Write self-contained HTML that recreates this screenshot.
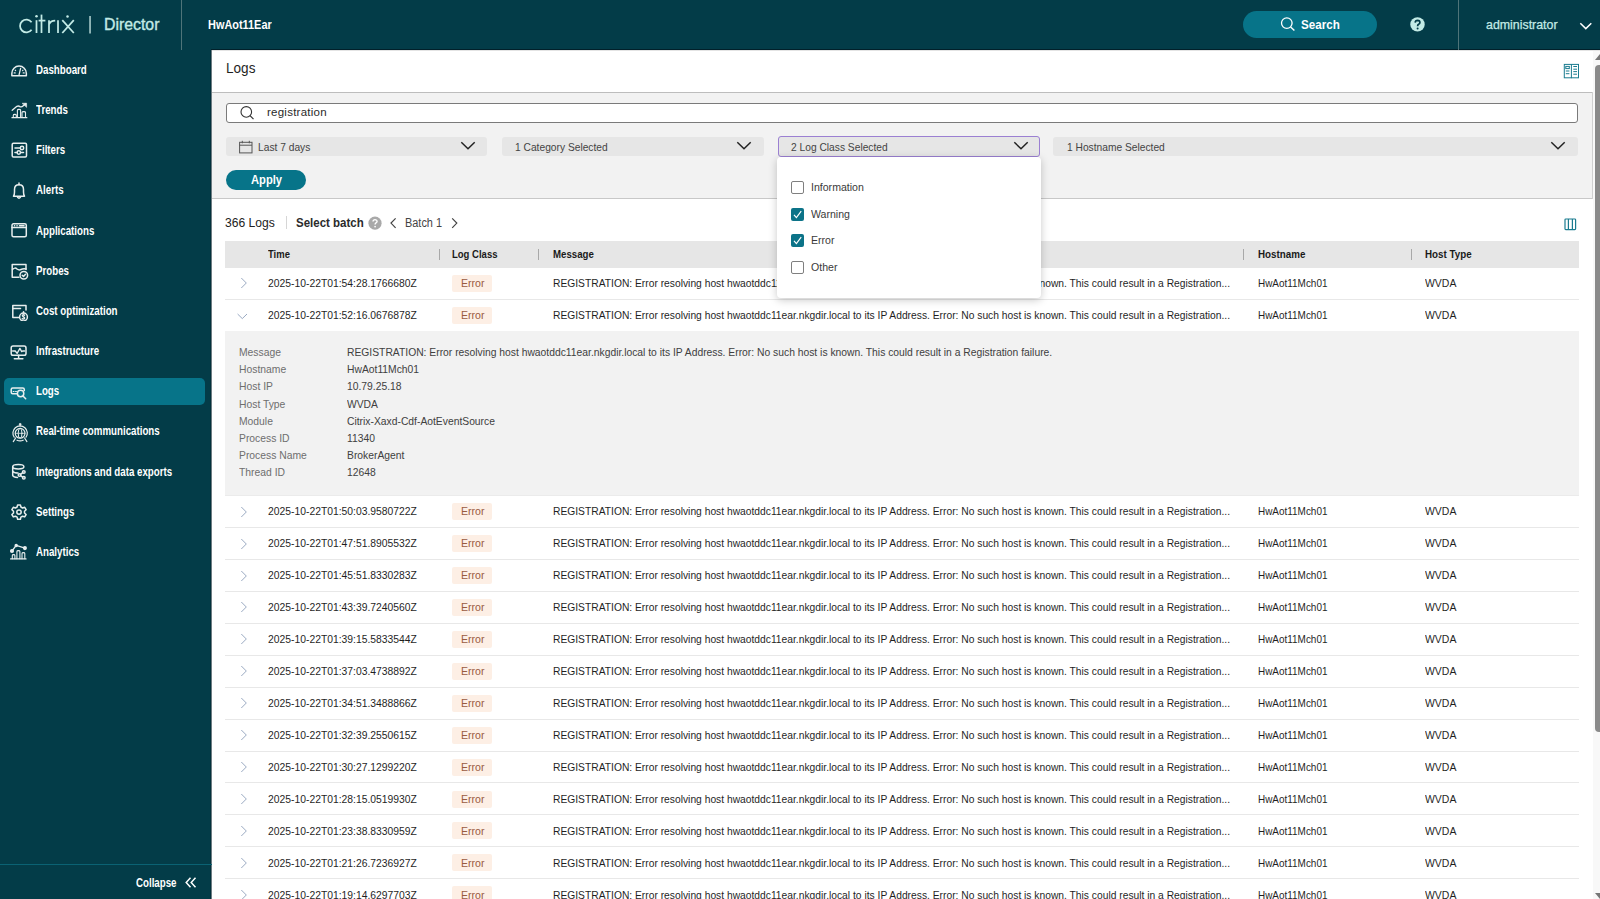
<!DOCTYPE html>
<html><head><meta charset="utf-8"><title>Logs - Citrix Director</title>
<style>
html,body{margin:0;padding:0;width:1600px;height:899px;overflow:hidden;background:#fff}
body{position:relative;font-family:"Liberation Sans",sans-serif}
.a{position:absolute}
.t{position:absolute;white-space:nowrap;line-height:1;transform-origin:0 0}
</style></head><body>
<div class="a" style="left:0px;top:0px;width:1600px;height:50px;background:#033c48"></div>
<div class="a" style="left:211px;top:49px;width:1389px;height:1px;background:#01202a"></div>
<svg class="a" style="left:0;top:0" width="100" height="50" viewBox="0 0 100 50">
<g stroke="#c3ebe6" stroke-width="1.75" fill="none" stroke-linecap="butt">
<path d="M31.6 22.2 A6.4 6.4 0 1 0 31.6 29.8"/>
<line x1="36.5" y1="20.2" x2="36.5" y2="33"/>
<line x1="41.5" y1="14.6" x2="41.5" y2="33"/>
<line x1="38.6" y1="20.6" x2="45.4" y2="20.6"/>
<path d="M49 33 V20.3 M49 24.5 Q50.5 20.6 55.2 20.6"/>
<line x1="58" y1="20.2" x2="58" y2="33"/>
<line x1="62.3" y1="20.2" x2="73.8" y2="33"/>
<line x1="73.8" y1="20.2" x2="62.3" y2="33"/>
</g>
<circle cx="36.5" cy="16.3" r="1.25" fill="#c3ebe6"/>
<circle cx="67.5" cy="16.5" r="1.25" fill="#c3ebe6"/>
<rect x="89.2" y="16" width="1.7" height="17.5" fill="#9fc3c3"/>
</svg>
<div class="t" style="left:104.30px;top:17.46px;font-size:16px;font-weight:400;color:#c3ebe6;transform:scaleX(0.99);-webkit-text-stroke:0.35px #c3ebe6;">Director</div>
<div class="a" style="left:181px;top:0px;width:1px;height:50px;background:#4f7479"></div>
<div class="t" style="left:208.40px;top:17.80px;font-size:13px;font-weight:700;color:#ffffff;transform:scaleX(0.84);">HwAot11Ear</div>
<div class="a" style="left:1243px;top:11px;width:134px;height:27px;border-radius:14px;background:#077489"></div>
<svg class="a" style="left:1278px;top:15px" width="20" height="20" viewBox="0 0 20 20">
<circle cx="8.8" cy="8.1" r="5.3" stroke="#fff" stroke-width="1.3" fill="none"/>
<line x1="12.6" y1="11.9" x2="16.4" y2="15.6" stroke="#fff" stroke-width="1.4"/></svg>
<div class="t" style="left:1301.00px;top:18.82px;font-size:12.5px;font-weight:700;color:#ffffff;transform:scaleX(0.93);">Search</div>
<svg class="a" style="left:1409px;top:16px" width="17" height="17" viewBox="0 0 17 17">
<circle cx="8.5" cy="8.4" r="7.2" fill="#c3ebe6"/>
<path d="M6.2 6.6 Q6.3 4.3 8.6 4.3 Q10.9 4.4 10.9 6.4 Q10.9 7.6 9.6 8.3 Q8.6 8.9 8.6 10.2" stroke="#033c48" stroke-width="1.7" fill="none"/>
<circle cx="8.6" cy="12.6" r="1" fill="#033c48"/></svg>
<div class="a" style="left:1458px;top:0px;width:1px;height:50px;background:#4f7479"></div>
<div class="t" style="left:1485.50px;top:19.32px;font-size:12.5px;font-weight:400;color:#c3ebe6;transform:scaleX(0.99);-webkit-text-stroke:0.25px #c3ebe6;">administrator</div>
<svg class="a" style="left:1578px;top:19px" width="16" height="12" viewBox="0 0 16 12">
<path d="M2.3 4.2 L7.8 9.6 L13.3 4.2" stroke="#fff" stroke-width="1.5" fill="none"/></svg>
<div class="a" style="left:0px;top:50px;width:212px;height:849px;background:#033c48"></div>
<div class="a" style="left:210px;top:50px;width:1px;height:849px;background:#02313c"></div>
<div class="a" style="left:211px;top:50px;width:1px;height:849px;background:#6d7c82"></div>
<div class="a" style="left:4px;top:378px;width:201px;height:27px;background:#077489;border-radius:5px"></div>
<div class="t" style="left:35.50px;top:63.74px;font-size:12px;font-weight:700;color:#ffffff;transform:scaleX(0.81);">Dashboard</div>
<div class="t" style="left:35.50px;top:103.93px;font-size:12px;font-weight:700;color:#ffffff;transform:scaleX(0.81);">Trends</div>
<div class="t" style="left:35.50px;top:144.12px;font-size:12px;font-weight:700;color:#ffffff;transform:scaleX(0.81);">Filters</div>
<div class="t" style="left:35.50px;top:184.31px;font-size:12px;font-weight:700;color:#ffffff;transform:scaleX(0.81);">Alerts</div>
<div class="t" style="left:35.50px;top:224.50px;font-size:12px;font-weight:700;color:#ffffff;transform:scaleX(0.81);">Applications</div>
<div class="t" style="left:35.50px;top:264.69px;font-size:12px;font-weight:700;color:#ffffff;transform:scaleX(0.81);">Probes</div>
<div class="t" style="left:35.50px;top:304.88px;font-size:12px;font-weight:700;color:#ffffff;transform:scaleX(0.81);">Cost optimization</div>
<div class="t" style="left:35.50px;top:345.07px;font-size:12px;font-weight:700;color:#ffffff;transform:scaleX(0.81);">Infrastructure</div>
<div class="t" style="left:35.50px;top:385.26px;font-size:12px;font-weight:700;color:#ffffff;transform:scaleX(0.81);">Logs</div>
<div class="t" style="left:35.50px;top:425.45px;font-size:12px;font-weight:700;color:#ffffff;transform:scaleX(0.81);">Real-time communications</div>
<div class="t" style="left:35.50px;top:465.64px;font-size:12px;font-weight:700;color:#ffffff;transform:scaleX(0.81);">Integrations and data exports</div>
<div class="t" style="left:35.50px;top:505.83px;font-size:12px;font-weight:700;color:#ffffff;transform:scaleX(0.81);">Settings</div>
<div class="t" style="left:35.50px;top:546.02px;font-size:12px;font-weight:700;color:#ffffff;transform:scaleX(0.81);">Analytics</div>
<svg class="a" style="left:9px;top:59.50px" width="20" height="20" viewBox="0 0 20 20"><g stroke="#e8eeee" stroke-width="1.5" fill="none" stroke-linecap="round" stroke-linejoin="round"><path d="M2.85 15.65 V13.3 A7.25 7.25 0 0 1 17.35 13.3 V15.65 Z"/><line x1="10.1" y1="14.7" x2="11.6" y2="8.4" stroke-width="1.3"/><line x1="6.2" y1="10.2" x2="6.6" y2="10.6" stroke-width="1.2"/><line x1="13.6" y1="10.6" x2="14" y2="10.2" stroke-width="1.2"/><line x1="5.2" y1="12.9" x2="6.2" y2="12.9" stroke-width="1.2"/><line x1="14.2" y1="12.9" x2="15.2" y2="12.9" stroke-width="1.2"/></g></svg>
<svg class="a" style="left:9px;top:99.69px" width="20" height="20" viewBox="0 0 20 20"><g stroke="#e8eeee" stroke-width="1.5" fill="none" stroke-linecap="round" stroke-linejoin="round"><path d="M3.2 10.3 L7.9 6.3 Q9.5 5.6 11 6.6 Q12.5 7.4 14.3 5.8 L16.6 3.8" stroke-width="1.3"/><path d="M13.4 3.3 L17.6 3.2 L17.6 7 Z" fill="#e8eeee" stroke-width="0.6"/><line x1="3" y1="17.7" x2="17.8" y2="17.7" stroke-width="1.3"/><path d="M4.3 17.5 V15.3 Q4.3 14.4 5.8 14.4 Q7.3 14.4 7.3 15.3 V17.5" stroke-width="1.1"/><path d="M8.4 17.5 V10.3 Q8.4 9.4 10 9.4 Q11.6 9.4 11.6 10.3 V17.5" stroke-width="1.1"/><path d="M13 17.5 V12.5 Q13 11.6 14.8 11.6 Q16.5 11.6 16.5 12.5 V17.5" stroke-width="1.1"/></g></svg>
<svg class="a" style="left:9px;top:139.88px" width="20" height="20" viewBox="0 0 20 20"><g stroke="#e8eeee" stroke-width="1.5" fill="none" stroke-linecap="round" stroke-linejoin="round"><rect x="3.2" y="3.2" width="14.3" height="13.8" rx="1.2"/><line x1="6" y1="8" x2="11" y2="8"/><circle cx="13" cy="8" r="1.7"/><line x1="6" y1="12.5" x2="8" y2="12.5"/><circle cx="9.8" cy="12.5" r="1.7"/><line x1="11.6" y1="12.5" x2="14.5" y2="12.5"/></g></svg>
<svg class="a" style="left:9px;top:180.07px" width="20" height="20" viewBox="0 0 20 20"><g stroke="#e8eeee" stroke-width="1.5" fill="none" stroke-linecap="round" stroke-linejoin="round"><path d="M4.5 16.2 Q5.5 14.8 5.5 12 V9.5 Q5.5 4.8 10 4.8 Q14.5 4.8 14.5 9.5 V12 Q14.5 14.8 15.5 16.2 Z"/><line x1="10" y1="3" x2="10" y2="4.7"/><path d="M8.6 17.3 Q10 19 11.4 17.3"/></g></svg>
<svg class="a" style="left:9px;top:220.26px" width="20" height="20" viewBox="0 0 20 20"><g stroke="#e8eeee" stroke-width="1.5" fill="none" stroke-linecap="round" stroke-linejoin="round"><rect x="3" y="3.8" width="14.3" height="13" rx="1.5"/><line x1="3" y1="7.5" x2="17.3" y2="7.5"/><line x1="5.5" y1="5.7" x2="5.6" y2="5.7"/><line x1="8" y1="5.7" x2="8.1" y2="5.7"/><line x1="10.5" y1="5.7" x2="15" y2="5.7"/></g></svg>
<svg class="a" style="left:9px;top:260.45px" width="20" height="20" viewBox="0 0 20 20"><g stroke="#e8eeee" stroke-width="1.5" fill="none" stroke-linecap="round" stroke-linejoin="round"><path d="M10 17.2 H3.2 V4.4 H17 V9.5"/><path d="M3.5 9.5 Q6 7 8 9 Q10 10.5 12 9.5 Q14 8.5 17 9"/><circle cx="14.8" cy="15.3" r="3.8"/><path d="M13.2 15.3 L14.5 16.5 L16.5 14.2"/></g></svg>
<svg class="a" style="left:9px;top:300.64px" width="20" height="20" viewBox="0 0 20 20"><g stroke="#e8eeee" stroke-width="1.5" fill="none" stroke-linecap="round" stroke-linejoin="round"><path d="M10 16.5 H3.8 V4.6 H17 V9"/><line x1="3.8" y1="7.6" x2="11.5" y2="7.6"/><circle cx="14.5" cy="16" r="3.9"/><path d="M15.5 14.2 Q14.5 13.4 13.6 14.1 Q13 15 14.5 15.8 Q16 16.6 15.3 17.7 Q14.4 18.4 13.3 17.6"/><line x1="14.5" y1="10.8" x2="14.5" y2="12"/></g></svg>
<svg class="a" style="left:9px;top:340.83px" width="20" height="20" viewBox="0 0 20 20"><g stroke="#e8eeee" stroke-width="1.5" fill="none" stroke-linecap="round" stroke-linejoin="round"><rect x="2.2" y="5.1" width="14.8" height="9.2" rx="1.8"/><path d="M3.6 10 H6.3 L8.1 12.4 L10.9 7.4 L12.7 10.6 L13.6 10 H15.6" stroke-width="1.3"/><line x1="9.6" y1="14.3" x2="9.6" y2="17.3"/><line x1="5.3" y1="17.7" x2="13.9" y2="17.7"/></g></svg>
<svg class="a" style="left:9px;top:381.02px" width="20" height="20" viewBox="0 0 20 20"><g stroke="#e8eeee" stroke-width="1.5" fill="none" stroke-linecap="round" stroke-linejoin="round"><path d="M8.3 12.8 H3.7 Q2.2 12.8 2.2 11.3 V8.4 Q2.2 6.9 3.7 6.9 H13.8 Q15.3 6.9 15.3 8.4 V9.6"/><line x1="4.2" y1="10.5" x2="5" y2="10.5" stroke-width="1.2"/><line x1="6.6" y1="10.5" x2="7.4" y2="10.5" stroke-width="1.2"/><circle cx="11.6" cy="12.5" r="3.2"/><line x1="14" y1="15" x2="16.7" y2="17.8"/></g></svg>
<svg class="a" style="left:9px;top:421.21px" width="20" height="22" viewBox="0 0 20 22"><g stroke="#e8eeee" stroke-width="1.5" fill="none" stroke-linecap="round" stroke-linejoin="round"><path d="M5.2 16.2 A7.2 7.2 0 1 1 17 16.2" stroke-width="1.2"/><circle cx="11.1" cy="12.3" r="4.9" stroke-width="1.2"/><ellipse cx="11.1" cy="12.3" rx="1.9" ry="4.9" stroke-width="1"/><line x1="6.4" y1="12.3" x2="15.8" y2="12.3" stroke-width="0.8"/><line x1="11.1" y1="3.8" x2="11.1" y2="5.2" stroke-width="1.1"/><circle cx="11.1" cy="3.2" r="0.9" fill="#e8eeee" stroke-width="0.6"/><path d="M4.3 20.6 L6.6 17 M17.9 20.6 L15.6 17" stroke-width="1.2"/><path d="M8 19.2 Q11.1 20.6 14.2 19.2" stroke-width="1.2"/></g></svg>
<svg class="a" style="left:9px;top:461.40px" width="20" height="20" viewBox="0 0 20 20"><g stroke="#e8eeee" stroke-width="1.5" fill="none" stroke-linecap="round" stroke-linejoin="round"><ellipse cx="9.3" cy="5.8" rx="5.6" ry="2.2"/><path d="M3.7 5.8 V14.5 Q4.5 16.3 8.5 16.4"/><path d="M3.8 10.5 Q5 12 9 12"/><circle cx="10.5" cy="14" r="1.3"/><circle cx="14.8" cy="11" r="1.3"/><circle cx="14.8" cy="16.8" r="1.3"/><line x1="11.6" y1="13.3" x2="13.7" y2="11.7"/><line x1="11.6" y1="14.7" x2="13.7" y2="16.1"/></g></svg>
<svg class="a" style="left:9px;top:501.59px" width="20" height="20" viewBox="0 0 20 20"><g stroke="#e8eeee" stroke-width="1.5" fill="none" stroke-linecap="round" stroke-linejoin="round"><path d="M8.6 2.9 H11.4 L11.9 5 L13.6 6 L15.7 5.3 L17.1 7.7 L15.5 9.2 V11 L17.1 12.5 L15.7 14.9 L13.6 14.2 L11.9 15.2 L11.4 17.3 H8.6 L8.1 15.2 L6.4 14.2 L4.3 14.9 L2.9 12.5 L4.5 11 V9.2 L2.9 7.7 L4.3 5.3 L6.4 6 L8.1 5 Z"/><circle cx="10" cy="10.1" r="2.2"/></g></svg>
<svg class="a" style="left:9px;top:541.78px" width="20" height="20" viewBox="0 0 20 20"><g stroke="#e8eeee" stroke-width="1.5" fill="none" stroke-linecap="round" stroke-linejoin="round"><path d="M3 9 L7.2 3.4 L15.9 6.1" stroke-width="1.3"/><circle cx="3" cy="9" r="1.3" fill="#e8eeee"/><circle cx="7.2" cy="3.5" r="1" fill="#e8eeee"/><circle cx="15.9" cy="6.1" r="1.3" fill="#e8eeee"/><line x1="1.6" y1="16.9" x2="17" y2="16.9" stroke-width="1.3"/><path d="M3.3 16.7 V13.4 Q3.3 12.6 4.6 12.6 Q5.9 12.6 5.9 13.4 V16.7" stroke-width="1.1"/><path d="M7.9 16.7 V9.4 Q7.9 8.6 9.4 8.6 Q10.9 8.6 10.9 9.4 V16.7" stroke-width="1.1"/><path d="M13 16.7 V11.4 Q13 10.6 14.4 10.6 Q15.8 10.6 15.8 11.4 V16.7" stroke-width="1.1"/></g></svg>
<div class="a" style="left:0px;top:864px;width:212px;height:1px;background:#0a6273"></div>
<div class="t" style="left:136.00px;top:877.34px;font-size:12px;font-weight:700;color:#ffffff;transform:scaleX(0.81);">Collapse</div>
<svg class="a" style="left:182px;top:874px" width="18" height="18" viewBox="0 0 18 18">
<path d="M8.5 3.8 L4.2 8.5 L8.5 13.2 M13.5 3.8 L9.2 8.5 L13.5 13.2" stroke="#fff" stroke-width="1.5" fill="none"/></svg>
<div class="a" style="left:212px;top:50px;width:1388px;height:849px;background:#ffffff"></div>
<div class="a" style="left:212px;top:50px;width:1388px;height:1px;background:#e4e4e4"></div>
<div class="t" style="left:225.50px;top:61.15px;font-size:14px;font-weight:400;color:#1f1f1f;transform:scaleX(0.97);">Logs</div>
<svg class="a" style="left:1562px;top:62px" width="18" height="18" viewBox="0 0 18 18">
<g stroke="#1b7c90" stroke-width="1" fill="none">
<rect x="2.3" y="2.4" width="14.2" height="13.4"/><line x1="9.4" y1="2.4" x2="9.4" y2="16.2"/>
<rect x="3.8" y="4.4" width="3.5" height="2.2"/><line x1="3.8" y1="9" x2="7.4" y2="9"/><line x1="3.8" y1="11.7" x2="7.4" y2="11.7"/>
<line x1="11.3" y1="4.5" x2="15" y2="4.5"/><line x1="11.3" y1="7.2" x2="15" y2="7.2"/><line x1="11.3" y1="9.6" x2="15" y2="9.6"/><line x1="11.3" y1="12.2" x2="15" y2="12.2"/>
</g></svg>
<div class="a" style="left:212px;top:92px;width:1381px;height:107px;background:#f2f2f2;border-top:1px solid #bdbdbd;border-bottom:1px solid #c8c8c8;box-sizing:border-box"></div>
<div class="a" style="left:1592px;top:92px;width:1px;height:107px;background:#d0d0d0"></div>
<div class="a" style="left:226px;top:103px;width:1352px;height:20px;background:#fff;border:1px solid #7a7a7a;border-radius:3px;box-sizing:border-box"></div>
<svg class="a" style="left:238px;top:104px" width="18" height="18" viewBox="0 0 18 18">
<circle cx="8.3" cy="7.9" r="5.3" stroke="#333" stroke-width="1.1" fill="none"/>
<line x1="12" y1="11.6" x2="15.5" y2="15.2" stroke="#333" stroke-width="1.2"/></svg>
<div class="t" style="left:267.00px;top:106.57px;font-size:11.5px;font-weight:400;color:#2a2a2a;letter-spacing:0.25px;">registration</div>
<div class="a" style="left:226px;top:136.5px;width:261px;height:19.5px;background:#e6e6e6;border-radius:3px"></div>
<div class="t" style="left:258.00px;top:141.69px;font-size:11px;font-weight:400;color:#444444;transform:scaleX(0.93);">Last 7 days</div>
<svg class="a" style="left:459.7px;top:138px" width="16" height="16" viewBox="0 0 16 16"><path d="M1.3 4.3 L8 10.7 L14.7 4.3" stroke="#222" stroke-width="1.5" fill="none"/></svg>
<div class="a" style="left:502px;top:136.5px;width:261.5px;height:19.5px;background:#e6e6e6;border-radius:3px"></div>
<div class="t" style="left:515.00px;top:141.69px;font-size:11px;font-weight:400;color:#444444;transform:scaleX(0.93);">1 Category Selected</div>
<svg class="a" style="left:736.2px;top:138px" width="16" height="16" viewBox="0 0 16 16"><path d="M1.3 4.3 L8 10.7 L14.7 4.3" stroke="#222" stroke-width="1.5" fill="none"/></svg>
<div class="a" style="left:778px;top:136px;width:262px;height:20.5px;background:#e6e6e6;border:1px solid #9b80d2;border-radius:3px;box-sizing:border-box"></div>
<div class="t" style="left:791.00px;top:141.69px;font-size:11px;font-weight:400;color:#444444;transform:scaleX(0.93);">2 Log Class Selected</div>
<svg class="a" style="left:1012.7px;top:138px" width="16" height="16" viewBox="0 0 16 16"><path d="M1.3 4.3 L8 10.7 L14.7 4.3" stroke="#222" stroke-width="1.5" fill="none"/></svg>
<div class="a" style="left:1053px;top:136.5px;width:524.5px;height:19.5px;background:#e6e6e6;border-radius:3px"></div>
<div class="t" style="left:1067.00px;top:141.69px;font-size:11px;font-weight:400;color:#444444;transform:scaleX(0.93);">1 Hostname Selected</div>
<svg class="a" style="left:1550.2px;top:138px" width="16" height="16" viewBox="0 0 16 16"><path d="M1.3 4.3 L8 10.7 L14.7 4.3" stroke="#222" stroke-width="1.5" fill="none"/></svg>
<svg class="a" style="left:237px;top:139px" width="18" height="16" viewBox="0 0 18 16">
<g stroke="#555" stroke-width="1" fill="none"><rect x="2.6" y="3.3" width="12.4" height="10.6"/><line x1="2.6" y1="6.2" x2="15" y2="6.2"/>
<line x1="5.3" y1="1.8" x2="5.3" y2="4.3"/><line x1="12.3" y1="1.8" x2="12.3" y2="4.3"/></g></svg>
<div class="a" style="left:226px;top:170px;width:80px;height:20px;border-radius:10px;background:#077489"></div>
<div class="t" style="left:251.00px;top:174.14px;font-size:12px;font-weight:700;color:#ffffff;transform:scaleX(0.93);">Apply</div>
<div class="t" style="left:225.00px;top:217.22px;font-size:12.5px;font-weight:400;color:#222222;transform:scaleX(0.97);">366 Logs</div>
<div class="a" style="left:286px;top:216px;width:1px;height:13px;background:#d6d6d6"></div>
<div class="t" style="left:296.00px;top:217.22px;font-size:12.5px;font-weight:700;color:#2b2b2b;transform:scaleX(0.92);">Select batch</div>
<svg class="a" style="left:367px;top:215px" width="16" height="16" viewBox="0 0 16 16">
<circle cx="8" cy="8.2" r="6.6" fill="#a9a9a9"/>
<path d="M6 6.5 Q6.1 4.6 8.1 4.6 Q10.1 4.7 10.1 6.3 Q10.1 7.3 9 7.9 Q8.1 8.4 8.1 9.6" stroke="#fff" stroke-width="1.4" fill="none"/>
<circle cx="8.1" cy="11.6" r="0.85" fill="#fff"/></svg>
<svg class="a" style="left:386px;top:215px" width="14" height="16" viewBox="0 0 14 16">
<path d="M9.6 3.4 L5 8.1 L9.6 12.8" stroke="#444" stroke-width="1.2" fill="none"/></svg>
<div class="t" style="left:405.00px;top:216.84px;font-size:12px;font-weight:400;color:#444444;transform:scaleX(0.91);">Batch 1</div>
<svg class="a" style="left:448px;top:215px" width="14" height="16" viewBox="0 0 14 16">
<path d="M4.2 3.4 L8.8 8.1 L4.2 12.8" stroke="#444" stroke-width="1.2" fill="none"/></svg>
<svg class="a" style="left:1562px;top:216px" width="16" height="16" viewBox="0 0 16 16">
<g stroke="#1b7c90" stroke-width="1.2" fill="none"><rect x="3" y="3" width="10.6" height="10.6" rx="0.8"/><line x1="6.4" y1="3" x2="6.4" y2="13.6"/><line x1="10.4" y1="3" x2="10.4" y2="13.6"/></g></svg>
<div class="a" style="left:225px;top:241px;width:1354px;height:27px;background:#e6e6e6"></div>
<div class="t" style="left:268.00px;top:248.69px;font-size:11px;font-weight:700;color:#1a1a1a;transform:scaleX(0.86);">Time</div>
<div class="t" style="left:452.00px;top:248.69px;font-size:11px;font-weight:700;color:#1a1a1a;transform:scaleX(0.865);">Log Class</div>
<div class="t" style="left:553.00px;top:248.69px;font-size:11px;font-weight:700;color:#1a1a1a;transform:scaleX(0.88);">Message</div>
<div class="t" style="left:1257.50px;top:248.69px;font-size:11px;font-weight:700;color:#1a1a1a;transform:scaleX(0.89);">Hostname</div>
<div class="t" style="left:1425.00px;top:248.69px;font-size:11px;font-weight:700;color:#1a1a1a;transform:scaleX(0.89);">Host Type</div>
<div class="a" style="left:438.5px;top:249px;width:1px;height:11px;background:#a8a8a8"></div>
<div class="a" style="left:538px;top:249px;width:1px;height:11px;background:#a8a8a8"></div>
<div class="a" style="left:1243px;top:249px;width:1px;height:11px;background:#a8a8a8"></div>
<div class="a" style="left:1411px;top:249px;width:1px;height:11px;background:#a8a8a8"></div>
<div class="a" style="left:225px;top:298.69px;width:1354px;height:1px;background:#e8e8e8"></div>
<svg class="a" style="left:236px;top:276.42px" width="14" height="14" viewBox="0 0 14 14"><path d="M5.3 2 L10.3 7 L5.3 12" stroke="#93a4bf" stroke-width="0.95" fill="none"/></svg>
<div class="t" style="left:268.00px;top:278.11px;font-size:11px;font-weight:400;color:#1f1f1f;transform:scaleX(0.94);">2025-10-22T01:54:28.1766680Z</div>
<div class="a" style="left:452px;top:274.82px;width:40px;height:17px;background:#fdefe5;border-radius:2px"></div>
<div class="t" style="left:460.50px;top:278.11px;font-size:11px;font-weight:400;color:#9a5b3f;transform:scaleX(0.96);">Error</div>
<div class="t" style="left:553.00px;top:278.11px;font-size:11px;font-weight:400;color:#1f1f1f;transform:scaleX(0.934);">REGISTRATION: Error resolving host hwaotddc11ear.nkgdir.local to its IP Address. Error: No such host is known. This could result in a Registration...</div>
<div class="t" style="left:1257.50px;top:278.11px;font-size:11px;font-weight:400;color:#1f1f1f;transform:scaleX(0.904);">HwAot11Mch01</div>
<div class="t" style="left:1425.00px;top:278.11px;font-size:11px;font-weight:400;color:#1f1f1f;transform:scaleX(0.95);">WVDA</div>
<svg class="a" style="left:234px;top:309.36px" width="16" height="14" viewBox="0 0 16 14"><path d="M3.6 5 L8.3 9.6 L13 5" stroke="#93a4bf" stroke-width="0.95" fill="none"/></svg>
<div class="t" style="left:268.00px;top:310.05px;font-size:11px;font-weight:400;color:#1f1f1f;transform:scaleX(0.94);">2025-10-22T01:52:16.0676878Z</div>
<div class="a" style="left:452px;top:306.76px;width:40px;height:17px;background:#fdefe5;border-radius:2px"></div>
<div class="t" style="left:460.50px;top:310.05px;font-size:11px;font-weight:400;color:#9a5b3f;transform:scaleX(0.96);">Error</div>
<div class="t" style="left:553.00px;top:310.05px;font-size:11px;font-weight:400;color:#1f1f1f;transform:scaleX(0.934);">REGISTRATION: Error resolving host hwaotddc11ear.nkgdir.local to its IP Address. Error: No such host is known. This could result in a Registration...</div>
<div class="t" style="left:1257.50px;top:310.05px;font-size:11px;font-weight:400;color:#1f1f1f;transform:scaleX(0.904);">HwAot11Mch01</div>
<div class="t" style="left:1425.00px;top:310.05px;font-size:11px;font-weight:400;color:#1f1f1f;transform:scaleX(0.95);">WVDA</div>
<div class="a" style="left:225px;top:526.94px;width:1354px;height:1px;background:#e8e8e8"></div>
<svg class="a" style="left:236px;top:504.67px" width="14" height="14" viewBox="0 0 14 14"><path d="M5.3 2 L10.3 7 L5.3 12" stroke="#93a4bf" stroke-width="0.95" fill="none"/></svg>
<div class="t" style="left:268.00px;top:506.36px;font-size:11px;font-weight:400;color:#1f1f1f;transform:scaleX(0.94);">2025-10-22T01:50:03.9580722Z</div>
<div class="a" style="left:452px;top:503.07px;width:40px;height:17px;background:#fdefe5;border-radius:2px"></div>
<div class="t" style="left:460.50px;top:506.36px;font-size:11px;font-weight:400;color:#9a5b3f;transform:scaleX(0.96);">Error</div>
<div class="t" style="left:553.00px;top:506.36px;font-size:11px;font-weight:400;color:#1f1f1f;transform:scaleX(0.934);">REGISTRATION: Error resolving host hwaotddc11ear.nkgdir.local to its IP Address. Error: No such host is known. This could result in a Registration...</div>
<div class="t" style="left:1257.50px;top:506.36px;font-size:11px;font-weight:400;color:#1f1f1f;transform:scaleX(0.904);">HwAot11Mch01</div>
<div class="t" style="left:1425.00px;top:506.36px;font-size:11px;font-weight:400;color:#1f1f1f;transform:scaleX(0.95);">WVDA</div>
<div class="a" style="left:225px;top:558.88px;width:1354px;height:1px;background:#e8e8e8"></div>
<svg class="a" style="left:236px;top:536.61px" width="14" height="14" viewBox="0 0 14 14"><path d="M5.3 2 L10.3 7 L5.3 12" stroke="#93a4bf" stroke-width="0.95" fill="none"/></svg>
<div class="t" style="left:268.00px;top:538.30px;font-size:11px;font-weight:400;color:#1f1f1f;transform:scaleX(0.94);">2025-10-22T01:47:51.8905532Z</div>
<div class="a" style="left:452px;top:535.01px;width:40px;height:17px;background:#fdefe5;border-radius:2px"></div>
<div class="t" style="left:460.50px;top:538.30px;font-size:11px;font-weight:400;color:#9a5b3f;transform:scaleX(0.96);">Error</div>
<div class="t" style="left:553.00px;top:538.30px;font-size:11px;font-weight:400;color:#1f1f1f;transform:scaleX(0.934);">REGISTRATION: Error resolving host hwaotddc11ear.nkgdir.local to its IP Address. Error: No such host is known. This could result in a Registration...</div>
<div class="t" style="left:1257.50px;top:538.30px;font-size:11px;font-weight:400;color:#1f1f1f;transform:scaleX(0.904);">HwAot11Mch01</div>
<div class="t" style="left:1425.00px;top:538.30px;font-size:11px;font-weight:400;color:#1f1f1f;transform:scaleX(0.95);">WVDA</div>
<div class="a" style="left:225px;top:590.82px;width:1354px;height:1px;background:#e8e8e8"></div>
<svg class="a" style="left:236px;top:568.55px" width="14" height="14" viewBox="0 0 14 14"><path d="M5.3 2 L10.3 7 L5.3 12" stroke="#93a4bf" stroke-width="0.95" fill="none"/></svg>
<div class="t" style="left:268.00px;top:570.24px;font-size:11px;font-weight:400;color:#1f1f1f;transform:scaleX(0.94);">2025-10-22T01:45:51.8330283Z</div>
<div class="a" style="left:452px;top:566.95px;width:40px;height:17px;background:#fdefe5;border-radius:2px"></div>
<div class="t" style="left:460.50px;top:570.24px;font-size:11px;font-weight:400;color:#9a5b3f;transform:scaleX(0.96);">Error</div>
<div class="t" style="left:553.00px;top:570.24px;font-size:11px;font-weight:400;color:#1f1f1f;transform:scaleX(0.934);">REGISTRATION: Error resolving host hwaotddc11ear.nkgdir.local to its IP Address. Error: No such host is known. This could result in a Registration...</div>
<div class="t" style="left:1257.50px;top:570.24px;font-size:11px;font-weight:400;color:#1f1f1f;transform:scaleX(0.904);">HwAot11Mch01</div>
<div class="t" style="left:1425.00px;top:570.24px;font-size:11px;font-weight:400;color:#1f1f1f;transform:scaleX(0.95);">WVDA</div>
<div class="a" style="left:225px;top:622.76px;width:1354px;height:1px;background:#e8e8e8"></div>
<svg class="a" style="left:236px;top:600.49px" width="14" height="14" viewBox="0 0 14 14"><path d="M5.3 2 L10.3 7 L5.3 12" stroke="#93a4bf" stroke-width="0.95" fill="none"/></svg>
<div class="t" style="left:268.00px;top:602.18px;font-size:11px;font-weight:400;color:#1f1f1f;transform:scaleX(0.94);">2025-10-22T01:43:39.7240560Z</div>
<div class="a" style="left:452px;top:598.89px;width:40px;height:17px;background:#fdefe5;border-radius:2px"></div>
<div class="t" style="left:460.50px;top:602.18px;font-size:11px;font-weight:400;color:#9a5b3f;transform:scaleX(0.96);">Error</div>
<div class="t" style="left:553.00px;top:602.18px;font-size:11px;font-weight:400;color:#1f1f1f;transform:scaleX(0.934);">REGISTRATION: Error resolving host hwaotddc11ear.nkgdir.local to its IP Address. Error: No such host is known. This could result in a Registration...</div>
<div class="t" style="left:1257.50px;top:602.18px;font-size:11px;font-weight:400;color:#1f1f1f;transform:scaleX(0.904);">HwAot11Mch01</div>
<div class="t" style="left:1425.00px;top:602.18px;font-size:11px;font-weight:400;color:#1f1f1f;transform:scaleX(0.95);">WVDA</div>
<div class="a" style="left:225px;top:654.70px;width:1354px;height:1px;background:#e8e8e8"></div>
<svg class="a" style="left:236px;top:632.43px" width="14" height="14" viewBox="0 0 14 14"><path d="M5.3 2 L10.3 7 L5.3 12" stroke="#93a4bf" stroke-width="0.95" fill="none"/></svg>
<div class="t" style="left:268.00px;top:634.12px;font-size:11px;font-weight:400;color:#1f1f1f;transform:scaleX(0.94);">2025-10-22T01:39:15.5833544Z</div>
<div class="a" style="left:452px;top:630.83px;width:40px;height:17px;background:#fdefe5;border-radius:2px"></div>
<div class="t" style="left:460.50px;top:634.12px;font-size:11px;font-weight:400;color:#9a5b3f;transform:scaleX(0.96);">Error</div>
<div class="t" style="left:553.00px;top:634.12px;font-size:11px;font-weight:400;color:#1f1f1f;transform:scaleX(0.934);">REGISTRATION: Error resolving host hwaotddc11ear.nkgdir.local to its IP Address. Error: No such host is known. This could result in a Registration...</div>
<div class="t" style="left:1257.50px;top:634.12px;font-size:11px;font-weight:400;color:#1f1f1f;transform:scaleX(0.904);">HwAot11Mch01</div>
<div class="t" style="left:1425.00px;top:634.12px;font-size:11px;font-weight:400;color:#1f1f1f;transform:scaleX(0.95);">WVDA</div>
<div class="a" style="left:225px;top:686.64px;width:1354px;height:1px;background:#e8e8e8"></div>
<svg class="a" style="left:236px;top:664.37px" width="14" height="14" viewBox="0 0 14 14"><path d="M5.3 2 L10.3 7 L5.3 12" stroke="#93a4bf" stroke-width="0.95" fill="none"/></svg>
<div class="t" style="left:268.00px;top:666.06px;font-size:11px;font-weight:400;color:#1f1f1f;transform:scaleX(0.94);">2025-10-22T01:37:03.4738892Z</div>
<div class="a" style="left:452px;top:662.77px;width:40px;height:17px;background:#fdefe5;border-radius:2px"></div>
<div class="t" style="left:460.50px;top:666.06px;font-size:11px;font-weight:400;color:#9a5b3f;transform:scaleX(0.96);">Error</div>
<div class="t" style="left:553.00px;top:666.06px;font-size:11px;font-weight:400;color:#1f1f1f;transform:scaleX(0.934);">REGISTRATION: Error resolving host hwaotddc11ear.nkgdir.local to its IP Address. Error: No such host is known. This could result in a Registration...</div>
<div class="t" style="left:1257.50px;top:666.06px;font-size:11px;font-weight:400;color:#1f1f1f;transform:scaleX(0.904);">HwAot11Mch01</div>
<div class="t" style="left:1425.00px;top:666.06px;font-size:11px;font-weight:400;color:#1f1f1f;transform:scaleX(0.95);">WVDA</div>
<div class="a" style="left:225px;top:718.58px;width:1354px;height:1px;background:#e8e8e8"></div>
<svg class="a" style="left:236px;top:696.31px" width="14" height="14" viewBox="0 0 14 14"><path d="M5.3 2 L10.3 7 L5.3 12" stroke="#93a4bf" stroke-width="0.95" fill="none"/></svg>
<div class="t" style="left:268.00px;top:698.00px;font-size:11px;font-weight:400;color:#1f1f1f;transform:scaleX(0.94);">2025-10-22T01:34:51.3488866Z</div>
<div class="a" style="left:452px;top:694.71px;width:40px;height:17px;background:#fdefe5;border-radius:2px"></div>
<div class="t" style="left:460.50px;top:698.00px;font-size:11px;font-weight:400;color:#9a5b3f;transform:scaleX(0.96);">Error</div>
<div class="t" style="left:553.00px;top:698.00px;font-size:11px;font-weight:400;color:#1f1f1f;transform:scaleX(0.934);">REGISTRATION: Error resolving host hwaotddc11ear.nkgdir.local to its IP Address. Error: No such host is known. This could result in a Registration...</div>
<div class="t" style="left:1257.50px;top:698.00px;font-size:11px;font-weight:400;color:#1f1f1f;transform:scaleX(0.904);">HwAot11Mch01</div>
<div class="t" style="left:1425.00px;top:698.00px;font-size:11px;font-weight:400;color:#1f1f1f;transform:scaleX(0.95);">WVDA</div>
<div class="a" style="left:225px;top:750.52px;width:1354px;height:1px;background:#e8e8e8"></div>
<svg class="a" style="left:236px;top:728.25px" width="14" height="14" viewBox="0 0 14 14"><path d="M5.3 2 L10.3 7 L5.3 12" stroke="#93a4bf" stroke-width="0.95" fill="none"/></svg>
<div class="t" style="left:268.00px;top:729.94px;font-size:11px;font-weight:400;color:#1f1f1f;transform:scaleX(0.94);">2025-10-22T01:32:39.2550615Z</div>
<div class="a" style="left:452px;top:726.65px;width:40px;height:17px;background:#fdefe5;border-radius:2px"></div>
<div class="t" style="left:460.50px;top:729.94px;font-size:11px;font-weight:400;color:#9a5b3f;transform:scaleX(0.96);">Error</div>
<div class="t" style="left:553.00px;top:729.94px;font-size:11px;font-weight:400;color:#1f1f1f;transform:scaleX(0.934);">REGISTRATION: Error resolving host hwaotddc11ear.nkgdir.local to its IP Address. Error: No such host is known. This could result in a Registration...</div>
<div class="t" style="left:1257.50px;top:729.94px;font-size:11px;font-weight:400;color:#1f1f1f;transform:scaleX(0.904);">HwAot11Mch01</div>
<div class="t" style="left:1425.00px;top:729.94px;font-size:11px;font-weight:400;color:#1f1f1f;transform:scaleX(0.95);">WVDA</div>
<div class="a" style="left:225px;top:782.46px;width:1354px;height:1px;background:#e8e8e8"></div>
<svg class="a" style="left:236px;top:760.19px" width="14" height="14" viewBox="0 0 14 14"><path d="M5.3 2 L10.3 7 L5.3 12" stroke="#93a4bf" stroke-width="0.95" fill="none"/></svg>
<div class="t" style="left:268.00px;top:761.88px;font-size:11px;font-weight:400;color:#1f1f1f;transform:scaleX(0.94);">2025-10-22T01:30:27.1299220Z</div>
<div class="a" style="left:452px;top:758.59px;width:40px;height:17px;background:#fdefe5;border-radius:2px"></div>
<div class="t" style="left:460.50px;top:761.88px;font-size:11px;font-weight:400;color:#9a5b3f;transform:scaleX(0.96);">Error</div>
<div class="t" style="left:553.00px;top:761.88px;font-size:11px;font-weight:400;color:#1f1f1f;transform:scaleX(0.934);">REGISTRATION: Error resolving host hwaotddc11ear.nkgdir.local to its IP Address. Error: No such host is known. This could result in a Registration...</div>
<div class="t" style="left:1257.50px;top:761.88px;font-size:11px;font-weight:400;color:#1f1f1f;transform:scaleX(0.904);">HwAot11Mch01</div>
<div class="t" style="left:1425.00px;top:761.88px;font-size:11px;font-weight:400;color:#1f1f1f;transform:scaleX(0.95);">WVDA</div>
<div class="a" style="left:225px;top:814.40px;width:1354px;height:1px;background:#e8e8e8"></div>
<svg class="a" style="left:236px;top:792.13px" width="14" height="14" viewBox="0 0 14 14"><path d="M5.3 2 L10.3 7 L5.3 12" stroke="#93a4bf" stroke-width="0.95" fill="none"/></svg>
<div class="t" style="left:268.00px;top:793.82px;font-size:11px;font-weight:400;color:#1f1f1f;transform:scaleX(0.94);">2025-10-22T01:28:15.0519930Z</div>
<div class="a" style="left:452px;top:790.53px;width:40px;height:17px;background:#fdefe5;border-radius:2px"></div>
<div class="t" style="left:460.50px;top:793.82px;font-size:11px;font-weight:400;color:#9a5b3f;transform:scaleX(0.96);">Error</div>
<div class="t" style="left:553.00px;top:793.82px;font-size:11px;font-weight:400;color:#1f1f1f;transform:scaleX(0.934);">REGISTRATION: Error resolving host hwaotddc11ear.nkgdir.local to its IP Address. Error: No such host is known. This could result in a Registration...</div>
<div class="t" style="left:1257.50px;top:793.82px;font-size:11px;font-weight:400;color:#1f1f1f;transform:scaleX(0.904);">HwAot11Mch01</div>
<div class="t" style="left:1425.00px;top:793.82px;font-size:11px;font-weight:400;color:#1f1f1f;transform:scaleX(0.95);">WVDA</div>
<div class="a" style="left:225px;top:846.34px;width:1354px;height:1px;background:#e8e8e8"></div>
<svg class="a" style="left:236px;top:824.07px" width="14" height="14" viewBox="0 0 14 14"><path d="M5.3 2 L10.3 7 L5.3 12" stroke="#93a4bf" stroke-width="0.95" fill="none"/></svg>
<div class="t" style="left:268.00px;top:825.76px;font-size:11px;font-weight:400;color:#1f1f1f;transform:scaleX(0.94);">2025-10-22T01:23:38.8330959Z</div>
<div class="a" style="left:452px;top:822.47px;width:40px;height:17px;background:#fdefe5;border-radius:2px"></div>
<div class="t" style="left:460.50px;top:825.76px;font-size:11px;font-weight:400;color:#9a5b3f;transform:scaleX(0.96);">Error</div>
<div class="t" style="left:553.00px;top:825.76px;font-size:11px;font-weight:400;color:#1f1f1f;transform:scaleX(0.934);">REGISTRATION: Error resolving host hwaotddc11ear.nkgdir.local to its IP Address. Error: No such host is known. This could result in a Registration...</div>
<div class="t" style="left:1257.50px;top:825.76px;font-size:11px;font-weight:400;color:#1f1f1f;transform:scaleX(0.904);">HwAot11Mch01</div>
<div class="t" style="left:1425.00px;top:825.76px;font-size:11px;font-weight:400;color:#1f1f1f;transform:scaleX(0.95);">WVDA</div>
<div class="a" style="left:225px;top:878.28px;width:1354px;height:1px;background:#e8e8e8"></div>
<svg class="a" style="left:236px;top:856.01px" width="14" height="14" viewBox="0 0 14 14"><path d="M5.3 2 L10.3 7 L5.3 12" stroke="#93a4bf" stroke-width="0.95" fill="none"/></svg>
<div class="t" style="left:268.00px;top:857.70px;font-size:11px;font-weight:400;color:#1f1f1f;transform:scaleX(0.94);">2025-10-22T01:21:26.7236927Z</div>
<div class="a" style="left:452px;top:854.41px;width:40px;height:17px;background:#fdefe5;border-radius:2px"></div>
<div class="t" style="left:460.50px;top:857.70px;font-size:11px;font-weight:400;color:#9a5b3f;transform:scaleX(0.96);">Error</div>
<div class="t" style="left:553.00px;top:857.70px;font-size:11px;font-weight:400;color:#1f1f1f;transform:scaleX(0.934);">REGISTRATION: Error resolving host hwaotddc11ear.nkgdir.local to its IP Address. Error: No such host is known. This could result in a Registration...</div>
<div class="t" style="left:1257.50px;top:857.70px;font-size:11px;font-weight:400;color:#1f1f1f;transform:scaleX(0.904);">HwAot11Mch01</div>
<div class="t" style="left:1425.00px;top:857.70px;font-size:11px;font-weight:400;color:#1f1f1f;transform:scaleX(0.95);">WVDA</div>
<div class="a" style="left:225px;top:910.22px;width:1354px;height:1px;background:#e8e8e8"></div>
<svg class="a" style="left:236px;top:887.95px" width="14" height="14" viewBox="0 0 14 14"><path d="M5.3 2 L10.3 7 L5.3 12" stroke="#93a4bf" stroke-width="0.95" fill="none"/></svg>
<div class="t" style="left:268.00px;top:889.64px;font-size:11px;font-weight:400;color:#1f1f1f;transform:scaleX(0.94);">2025-10-22T01:19:14.6297703Z</div>
<div class="a" style="left:452px;top:886.35px;width:40px;height:17px;background:#fdefe5;border-radius:2px"></div>
<div class="t" style="left:460.50px;top:889.64px;font-size:11px;font-weight:400;color:#9a5b3f;transform:scaleX(0.96);">Error</div>
<div class="t" style="left:553.00px;top:889.64px;font-size:11px;font-weight:400;color:#1f1f1f;transform:scaleX(0.934);">REGISTRATION: Error resolving host hwaotddc11ear.nkgdir.local to its IP Address. Error: No such host is known. This could result in a Registration...</div>
<div class="t" style="left:1257.50px;top:889.64px;font-size:11px;font-weight:400;color:#1f1f1f;transform:scaleX(0.904);">HwAot11Mch01</div>
<div class="t" style="left:1425.00px;top:889.64px;font-size:11px;font-weight:400;color:#1f1f1f;transform:scaleX(0.95);">WVDA</div>
<div class="a" style="left:225px;top:330.6px;width:1354px;height:165.2px;background:#f2f2f2;border-bottom:1px solid #ebebeb;box-sizing:border-box"></div>
<div class="t" style="left:239.00px;top:347.19px;font-size:11px;font-weight:400;color:#6e6e6e;transform:scaleX(0.94);">Message</div>
<div class="t" style="left:347.00px;top:347.19px;font-size:11px;font-weight:400;color:#404040;transform:scaleX(0.938);">REGISTRATION: Error resolving host hwaotddc11ear.nkgdir.local to its IP Address. Error: No such host is known. This could result in a Registration failure.</div>
<div class="t" style="left:239.00px;top:364.32px;font-size:11px;font-weight:400;color:#6e6e6e;transform:scaleX(0.94);">Hostname</div>
<div class="t" style="left:347.00px;top:364.32px;font-size:11px;font-weight:400;color:#404040;transform:scaleX(0.938);">HwAot11Mch01</div>
<div class="t" style="left:239.00px;top:381.45px;font-size:11px;font-weight:400;color:#6e6e6e;transform:scaleX(0.94);">Host IP</div>
<div class="t" style="left:347.00px;top:381.45px;font-size:11px;font-weight:400;color:#404040;transform:scaleX(0.938);">10.79.25.18</div>
<div class="t" style="left:239.00px;top:398.58px;font-size:11px;font-weight:400;color:#6e6e6e;transform:scaleX(0.94);">Host Type</div>
<div class="t" style="left:347.00px;top:398.58px;font-size:11px;font-weight:400;color:#404040;transform:scaleX(0.938);">WVDA</div>
<div class="t" style="left:239.00px;top:415.71px;font-size:11px;font-weight:400;color:#6e6e6e;transform:scaleX(0.94);">Module</div>
<div class="t" style="left:347.00px;top:415.71px;font-size:11px;font-weight:400;color:#404040;transform:scaleX(0.938);">Citrix-Xaxd-Cdf-AotEventSource</div>
<div class="t" style="left:239.00px;top:432.84px;font-size:11px;font-weight:400;color:#6e6e6e;transform:scaleX(0.94);">Process ID</div>
<div class="t" style="left:347.00px;top:432.84px;font-size:11px;font-weight:400;color:#404040;transform:scaleX(0.938);">11340</div>
<div class="t" style="left:239.00px;top:449.97px;font-size:11px;font-weight:400;color:#6e6e6e;transform:scaleX(0.94);">Process Name</div>
<div class="t" style="left:347.00px;top:449.97px;font-size:11px;font-weight:400;color:#404040;transform:scaleX(0.938);">BrokerAgent</div>
<div class="t" style="left:239.00px;top:467.10px;font-size:11px;font-weight:400;color:#6e6e6e;transform:scaleX(0.94);">Thread ID</div>
<div class="t" style="left:347.00px;top:467.10px;font-size:11px;font-weight:400;color:#404040;transform:scaleX(0.938);">12648</div>
<div class="a" style="left:777px;top:157px;width:264px;height:141px;background:#fff;border-radius:4px;box-shadow:0 2px 8px rgba(0,0,0,0.22)"></div>
<div class="a" style="left:790.5px;top:180.80px;width:13px;height:13px;border:1.4px solid #7f7f7f;border-radius:2px;box-sizing:border-box;background:#fff"></div>
<div class="t" style="left:811.00px;top:181.99px;font-size:11px;font-weight:400;color:#3a3a3a;transform:scaleX(0.96);">Information</div>
<div class="a" style="left:790.5px;top:207.55px;width:13px;height:13px;background:#0c7388;border-radius:2px"></div>
<svg class="a" style="left:790.5px;top:207.55px" width="13" height="13" viewBox="0 0 13 13"><path d="M3 6.8 L5.4 9.6 L10.2 3.2" stroke="#fff" stroke-width="1.2" fill="none"/></svg>
<div class="t" style="left:811.00px;top:208.74px;font-size:11px;font-weight:400;color:#3a3a3a;transform:scaleX(0.96);">Warning</div>
<div class="a" style="left:790.5px;top:234.30px;width:13px;height:13px;background:#0c7388;border-radius:2px"></div>
<svg class="a" style="left:790.5px;top:234.30px" width="13" height="13" viewBox="0 0 13 13"><path d="M3 6.8 L5.4 9.6 L10.2 3.2" stroke="#fff" stroke-width="1.2" fill="none"/></svg>
<div class="t" style="left:811.00px;top:235.49px;font-size:11px;font-weight:400;color:#3a3a3a;transform:scaleX(0.96);">Error</div>
<div class="a" style="left:790.5px;top:261.05px;width:13px;height:13px;border:1.4px solid #7f7f7f;border-radius:2px;box-sizing:border-box;background:#fff"></div>
<div class="t" style="left:811.00px;top:262.24px;font-size:11px;font-weight:400;color:#3a3a3a;transform:scaleX(0.96);">Other</div>
<div class="a" style="left:1593px;top:51px;width:7px;height:848px;background:#f8f8f8"></div>
<svg class="a" style="left:1593px;top:50px" width="7" height="849" viewBox="0 0 7 849"><path d="M2 10 L7 4 L7 10 Z" fill="#777"/><path d="M2 843 L7 849 L7 843 Z" fill="#777"/></svg>
<div class="a" style="left:1595px;top:65px;width:8px;height:667px;background:#8a8a8a;border-radius:4px"></div>
</body></html>
